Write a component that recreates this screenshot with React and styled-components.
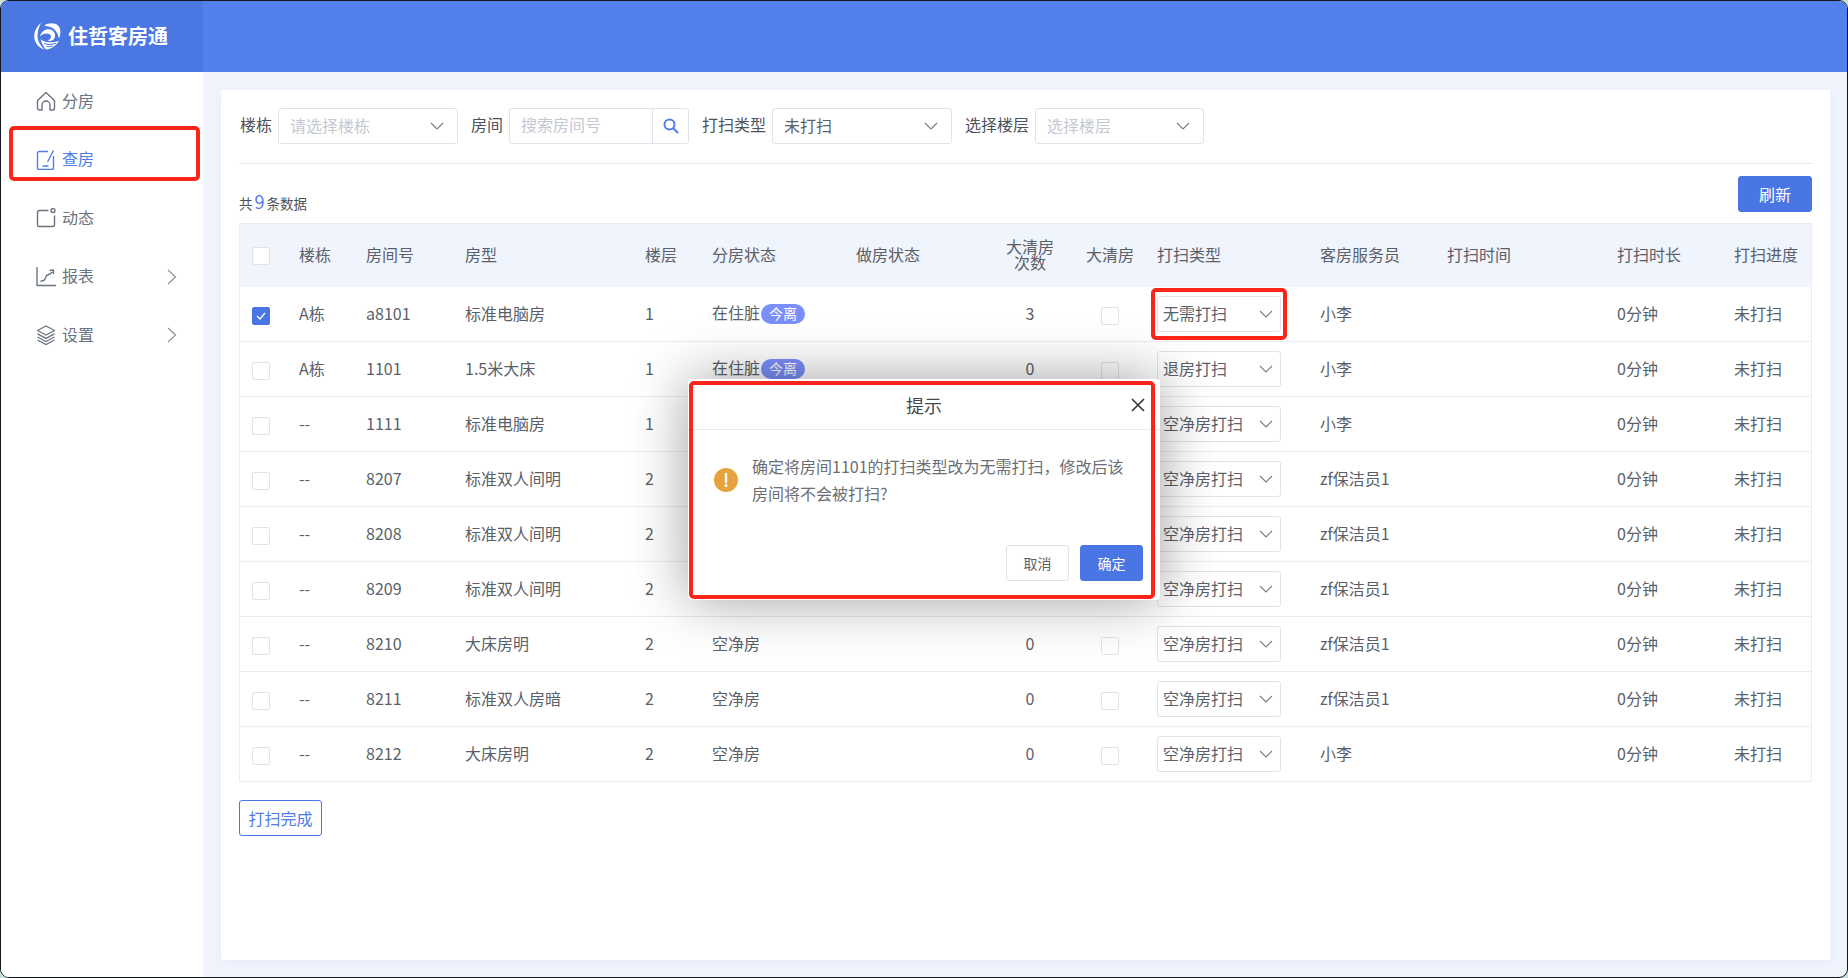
import React from "react";
import styled, { createGlobalStyle } from "styled-components";

const Global = createGlobalStyle`
  html, body { margin: 0; padding: 0; background: #c6e0df; }
  * { box-sizing: border-box; }
  body { font-family: "Noto Sans CJK SC", "Noto Sans", sans-serif; font-size: 16px; color: #5a5f69; }
`;

const Frame = styled.div`
  position: relative;
  width: 1848px;
  height: 978px;
  border: 1px solid #14181c;
  border-radius: 9px;
  overflow: hidden;
  background: #f0f4fd;
  display: flex;
  flex-direction: column;
`;

const Header = styled.header`
  flex: none;
  height: 71px;
  display: flex;
  background: #5480ee;
`;
const Brand = styled.div`
  width: 202px;
  display: flex;
  align-items: center;
  gap: 7px;
  padding-left: 33px;
  background: #4a77e2;
  color: #fff;
  font-size: 20px;
  font-weight: 700;
  line-height: 28px;
  span { margin-bottom: 2px; }
`;

const Body = styled.div`
  flex: 1;
  display: flex;
  min-height: 0;
`;
const Side = styled.aside`
  width: 202px;
  flex: none;
  background: #fff;
`;
const MenuItem = styled.div`
  height: 58.5px;
  display: flex;
  align-items: center;
  padding: 0 26px 0 35px;
  gap: 6px;
  line-height: 24px;
  color: ${(p) => (p.$active ? "#4f7dea" : "#6c7380")};
  span { margin-bottom: 3px; }
  svg.arrow { margin-left: auto; }
`;

const Content = styled.main`
  flex: 1;
  padding: 18px 17px 17px 18px;
  min-width: 0;
`;
const Panel = styled.div`
  height: 100%;
  background: #fff;
  padding: 18px 18px 0;
  box-shadow: 0 2px 10px rgba(80, 100, 160, 0.06);
`;

const Filters = styled.div`
  display: flex;
  align-items: center;
  padding: 0 0 19px 1px;
  border-bottom: 1px solid #e4e7ed;
`;
const FilterLabel = styled.label`
  color: #4d525b;
  height: 36px;
  line-height: 33px;
  margin-right: 6px;
  margin-left: ${(p) => p.$gap || 0}px;
`;
const Select = styled.div`
  width: ${(p) => p.$w}px;
  height: 36px;
  flex: none;
  border: 1px solid #dfe3ec;
  border-radius: 3px;
  background: #fff;
  display: flex;
  align-items: center;
  justify-content: space-between;
  padding: 0 ${(p) => p.$pr ?? 13}px 0 ${(p) => p.$pl ?? 11}px;
  line-height: 26px;
  white-space: nowrap;
  color: ${(p) => (p.$holder ? "#c4c8d2" : "#5a5f69")};
  span { margin-bottom: 3px; }
  td & { margin-top: 3px; }
`;
const SearchBox = styled.div`
  width: 180px;
  height: 36px;
  flex: none;
  display: flex;
  border: 1px solid #dfe3ec;
  border-radius: 3px;
`;
const SearchText = styled.span`
  flex: 1;
  padding-left: 11px;
  line-height: 31px;
  color: #c4c8d2;
`;
const SearchBtn = styled.span`
  width: 36px;
  border-left: 1px solid #dfe3ec;
  display: flex;
  align-items: center;
  justify-content: center;
`;

const Summary = styled.div`
  display: flex;
  justify-content: space-between;
  align-items: flex-end;
  padding-top: 12px;
  margin-bottom: 11px;
`;
const Count = styled.div`
  font-size: 13.5px;
  line-height: 24px;
  color: #4d525b;
  margin-bottom: -3px;
  b { font-size: 18px; font-weight: 400; color: #4f7dea; margin: 0 2px; }
`;
const Button = styled.button`
  font: inherit;
  font-size: ${(p) => p.$size || 16}px;
  line-height: 1;
  width: ${(p) => p.$w}px;
  height: 36px;
  padding: 0 0 1px;
  border-radius: 3px;
  border: 1px solid ${(p) => (p.$kind === "plain" ? "#dfe3ec" : "#4a76e3")};
  background: ${(p) => (p.$kind === "primary" ? "#4a76e3" : "#fff")};
  color: ${(p) => (p.$kind === "primary" ? "#fff" : p.$kind === "plain" ? "#606266" : "#4f7dea")};
`;

const TableWrap = styled.div`
  border: 1px solid #e9edf8;
  width: 1573px;
`;
const Table = styled.table`
  width: 1571px;
  table-layout: fixed;
  border-collapse: separate;
  border-spacing: 0;
`;
const Th = styled.th`
  height: 63px;
  padding: 0 0 3px 12px;
  background: #f0f4fd;
  font-weight: 400;
  text-align: left;
  line-height: 16px;
  color: #5a5f69;
  &.center { text-align: center; padding: 0 0 3px; }
`;
const Td = styled.td`
  height: 55px;
  padding: 0 0 3px 12px;
  line-height: 22px;
  border-bottom: 1px solid #e9edf8;
  color: #5a5f69;
  white-space: nowrap;
  &.center { text-align: center; padding: 0 0 3px; }
  tr:last-child > & { border-bottom: 0; height: 54px; }
`;
const Box = styled.span`
  display: inline-flex;
  align-items: center;
  justify-content: center;
  vertical-align: middle;
  width: 18px;
  height: 18px;
  margin-top: 3px;
  border-radius: 2px;
  border: 1px solid ${(p) => (p.$on ? "#4a76e3" : "#dfe3ec")};
  background: ${(p) => (p.$on ? "#4a76e3" : "#fff")};
`;
const Badge = styled.span`
  display: inline-block;
  width: 44px;
  height: 20px;
  border-radius: 10px;
  margin-left: 1px;
  background: #7b8ffc;
  color: #fff;
  font-size: 14px;
  line-height: 19px;
  text-align: center;
  vertical-align: 0;
`;
const Finish = styled(Button)`
  margin-top: 18px;
`;

const Dialog = styled.div`
  position: absolute;
  left: 687px;
  top: 378px;
  width: 472px;
  height: 221px;
  background: #fff;
  border-radius: 4px;
  box-shadow: 0 0 56px rgba(0, 0, 0, 0.38);
  display: flex;
  flex-direction: column;
`;
const DialogHead = styled.div`
  position: relative;
  flex: none;
  height: 51px;
  border-bottom: 1px solid #e8eaef;
  font-size: 18px;
  line-height: 52px;
  text-align: center;
  color: #45494f;
  svg { position: absolute; right: 15px; top: 19px; }
`;
const DialogBody = styled.div`
  display: flex;
  align-items: center;
  gap: 14px;
  padding: 23px 0 0 26px;
  font-size: 16px;
  line-height: 27px;
  color: #6b6e75;
  svg { flex: none; margin-top: -1px; }
`;
const Message = styled.div`
  width: 376px;
`;
const DialogFoot = styled.div`
  margin-top: auto;
  padding: 0 17px 19px;
  display: flex;
  justify-content: flex-end;
  gap: 11px;
`;

const Mark = styled.div`
  position: absolute;
  left: ${(p) => p.$x}px;
  top: ${(p) => p.$y}px;
  width: ${(p) => p.$w}px;
  height: ${(p) => p.$h}px;
  border: 4px solid #fb2418;
  border-radius: 5px;
  pointer-events: none;
`;

const Down = ({ color = "#777c85" }) => (
  <svg width="14" height="8" viewBox="0 0 14 8" fill="none" stroke={color} strokeWidth="1.1">
    <path d="M1 1l6 6 6-6" />
  </svg>
);
const Right = () => (
  <svg className="arrow" width="10" height="16" viewBox="0 0 10 16" fill="none" stroke="#8b909a" strokeWidth="1.2">
    <path d="M1 1l7.5 7L1 15" />
  </svg>
);

const Logo = () => (
  <svg width="27" height="27" viewBox="0 0 27 27" fill="#fff">
    <path d="M7 0C2 4-.5 10 .5 16c1 5 4.500 9 10 10.500C6.500 22.500 3.500 18 3.500 13 3.500 8 5 4 7 0z" />
    <path d="M10 2.500c5-3 11-3 14 0 3 3 3 8 1 13-1-4-2.500-8-6.500-10.500-3-1.500-5.500-1.500-8.500-2.500z" />
    <path d="M6 13.500C7.500 7 14 4.500 18.500 7.500c3.500 2.500 3.500 7 .5 9.500-1.500 1-3.500 1.200-5.500.6 3-1 4.500-4 2.500-6C13 9.500 8.500 11 6 13.500z" />
    <path d="M6.500 16c4 4 11 4 18.500 2-3 5-8 8-13 8.500C9 23 7.500 20 6.500 16z" />
    <path d="M10 20.500c4 1.500 8 1.200 12-.3M12.500 23.500c3 .4 4.500.1 6.500-.8" fill="none" stroke="#4a77e2" strokeWidth="1" />
  </svg>
);

const icons = {
  home: <path d="M1.500 9.500L10 1.500l8.500 8V17a2 2 0 0 1-2 2H14v-5a4 4 0 0 0-8 0v5H3.500a2 2 0 0 1-2-2z" />,
  edit: (
    <>
      <path d="M12 1.500H3a1.500 1.500 0 0 0-1.500 1.500v15A1.500 1.500 0 0 0 3 19.500h13a1.500 1.500 0 0 0 1.500-1.500V6" />
      <path d="M17.500 .5L11.500 12M6.500 16h6" />
    </>
  ),
  feed: (
    <>
      <path d="M12.500 2.500H3A1.500 1.500 0 0 0 1.500 4v13A1.500 1.500 0 0 0 3 18.500h14a1.500 1.500 0 0 0 1.500-1.500V7.500" />
      <circle cx="17" cy="2.500" r="2" />
    </>
  ),
  chart: (
    <>
      <path d="M1 0v18.500h19" />
      <path d="M4.500 14.500l4-1.500 2-4.500 3.500-1.500 2.500-2M13.500 3.500l4-.5v4" />
    </>
  ),
  layers: (
    <>
      <path d="M10 1l8.500 4.500L10 10 1.500 5.500z" />
      <path d="M1.500 8.800L10 13.300l8.500-4.500M1.500 12L10 16.500 18.500 12M1.500 15L10 19.500 18.500 15" />
    </>
  ),
};
const MenuIcon = ({ name }) => (
  <svg width="20" height="20" viewBox="0 0 20 20" fill="none" stroke="currentColor" strokeWidth="1.400" strokeLinejoin="round">
    {icons[name]}
  </svg>
);

const menu = [
  { name: "home", label: "分房" },
  { name: "edit", label: "查房", active: true },
  { name: "feed", label: "动态" },
  { name: "chart", label: "报表", more: true },
  { name: "layers", label: "设置", more: true },
];

const cols = [47, 67, 99, 180, 67, 144, 141, 90, 70, 163, 127, 170, 117, 89];

// rows 3-6 lie under the dialog, so their middle columns stay empty
const rows = [
  { on: true, tower: "A栋", no: "a8101", type: "标准电脑房", floor: 1, state: "在住脏", leave: true, times: 3, clean: "无需打扫", staff: "小李" },
  { tower: "A栋", no: "1101", type: "1.5米大床", floor: 1, state: "在住脏", leave: true, times: 0, clean: "退房打扫", staff: "小李" },
  { tower: "--", no: "1111", type: "标准电脑房", floor: 1, hidden: true, clean: "空净房打扫", staff: "小李" },
  { tower: "--", no: "8207", type: "标准双人间明", floor: 2, hidden: true, clean: "空净房打扫", staff: "zf保洁员1" },
  { tower: "--", no: "8208", type: "标准双人间明", floor: 2, hidden: true, clean: "空净房打扫", staff: "zf保洁员1" },
  { tower: "--", no: "8209", type: "标准双人间明", floor: 2, hidden: true, clean: "空净房打扫", staff: "zf保洁员1" },
  { tower: "--", no: "8210", type: "大床房明", floor: 2, state: "空净房", times: 0, clean: "空净房打扫", staff: "zf保洁员1" },
  { tower: "--", no: "8211", type: "标准双人房暗", floor: 2, state: "空净房", times: 0, clean: "空净房打扫", staff: "zf保洁员1" },
  { tower: "--", no: "8212", type: "大床房明", floor: 2, state: "空净房", times: 0, clean: "空净房打扫", staff: "小李" },
];

const App = () => (
  <Frame>
    <Global />
    <Header>
      <Brand>
        <Logo />
        <span>住哲客房通</span>
      </Brand>
    </Header>
    <Body>
      <Side>
        {menu.map((m) => (
          <MenuItem key={m.label} $active={m.active}>
            <MenuIcon name={m.name} />
            <span>{m.label}</span>
            {m.more && <Right />}
          </MenuItem>
        ))}
      </Side>
      <Content>
        <Panel>
          <Filters>
            <FilterLabel>楼栋</FilterLabel>
            <Select $w={180} $holder>
              <span>请选择楼栋</span>
              <Down />
            </Select>
            <FilterLabel $gap={13}>房间</FilterLabel>
            <SearchBox>
              <SearchText>搜索房间号</SearchText>
              <SearchBtn>
                <svg width="16" height="16" viewBox="0 0 16 16" fill="none" stroke="#4f7dea" strokeWidth="2">
                  <circle cx="6.500" cy="6.500" r="5" />
                  <path d="M10 10l5 5" />
                </svg>
              </SearchBtn>
            </SearchBox>
            <FilterLabel $gap={13}>打扫类型</FilterLabel>
            <Select $w={180}>
              <span>未打扫</span>
              <Down />
            </Select>
            <FilterLabel $gap={13}>选择楼层</FilterLabel>
            <Select $w={169} $holder>
              <span>选择楼层</span>
              <Down />
            </Select>
          </Filters>
          <Summary>
            <Count>
              共<b>9</b>条数据
            </Count>
            <Button $kind="primary" $w={74}>刷新</Button>
          </Summary>
          <TableWrap>
            <Table>
              <colgroup>
                {cols.map((w, i) => (
                  <col key={i} width={w} />
                ))}
              </colgroup>
              <thead>
                <tr>
                  <Th><Box /></Th>
                  <Th>楼栋</Th>
                  <Th>房间号</Th>
                  <Th>房型</Th>
                  <Th>楼层</Th>
                  <Th>分房状态</Th>
                  <Th>做房状态</Th>
                  <Th className="center">大清房<br />次数</Th>
                  <Th className="center">大清房</Th>
                  <Th>打扫类型</Th>
                  <Th>客房服务员</Th>
                  <Th>打扫时间</Th>
                  <Th>打扫时长</Th>
                  <Th>打扫进度</Th>
                </tr>
              </thead>
              <tbody>
                {rows.map((r) => (
                  <tr key={r.no}>
                    <Td>
                      <Box $on={r.on}>
                        {r.on && (
                          <svg width="12" height="10" viewBox="0 0 12 10" fill="none" stroke="#fff" strokeWidth="1.300">
                            <path d="M2 5l3 3 5-6" />
                          </svg>
                        )}
                      </Box>
                    </Td>
                    <Td>{r.tower}</Td>
                    <Td>{r.no}</Td>
                    <Td>{r.type}</Td>
                    <Td>{r.floor}</Td>
                    <Td>
                      {r.state}
                      {r.leave && <Badge>今离</Badge>}
                    </Td>
                    <Td />
                    <Td className="center">{r.times}</Td>
                    <Td className="center">{!r.hidden && <Box />}</Td>
                    <Td>
                      <Select $w={124} $pl={5} $pr={7}>
                        <span>{r.clean}</span>
                        <Down />
                      </Select>
                    </Td>
                    <Td>{r.staff}</Td>
                    <Td />
                    <Td>0分钟</Td>
                    <Td>未打扫</Td>
                  </tr>
                ))}
              </tbody>
            </Table>
          </TableWrap>
          <Finish $w={83}>打扫完成</Finish>
        </Panel>
      </Content>
    </Body>
    <Dialog>
      <DialogHead>
        提示
        <svg width="14" height="14" viewBox="0 0 14 14" fill="none" stroke="#333" strokeWidth="1.600">
          <path d="M1 1l12 12M13 1L1 13" />
        </svg>
      </DialogHead>
      <DialogBody>
        <svg width="24" height="24" viewBox="0 0 24 24">
          <circle cx="12" cy="12" r="12" fill="#e6a23c" />
          <path d="M12 6v8" stroke="#fff" strokeWidth="2.400" strokeLinecap="round" />
          <circle cx="12" cy="17.500" r="1.500" fill="#fff" />
        </svg>
        <Message>确定将房间1101的打扫类型改为无需打扫，修改后该房间将不会被打扫?</Message>
      </DialogBody>
      <DialogFoot>
        <Button $kind="plain" $w={63} $size={14}>取消</Button>
        <Button $kind="primary" $w={63} $size={14}>确定</Button>
      </DialogFoot>
    </Dialog>
    <Mark $x={8} $y={125} $w={191} $h={55} />
    <Mark $x={1150} $y={287} $w={136} $h={52} />
    <Mark $x={688} $y={380} $w={466} $h={218} />
  </Frame>
);

export default App;
